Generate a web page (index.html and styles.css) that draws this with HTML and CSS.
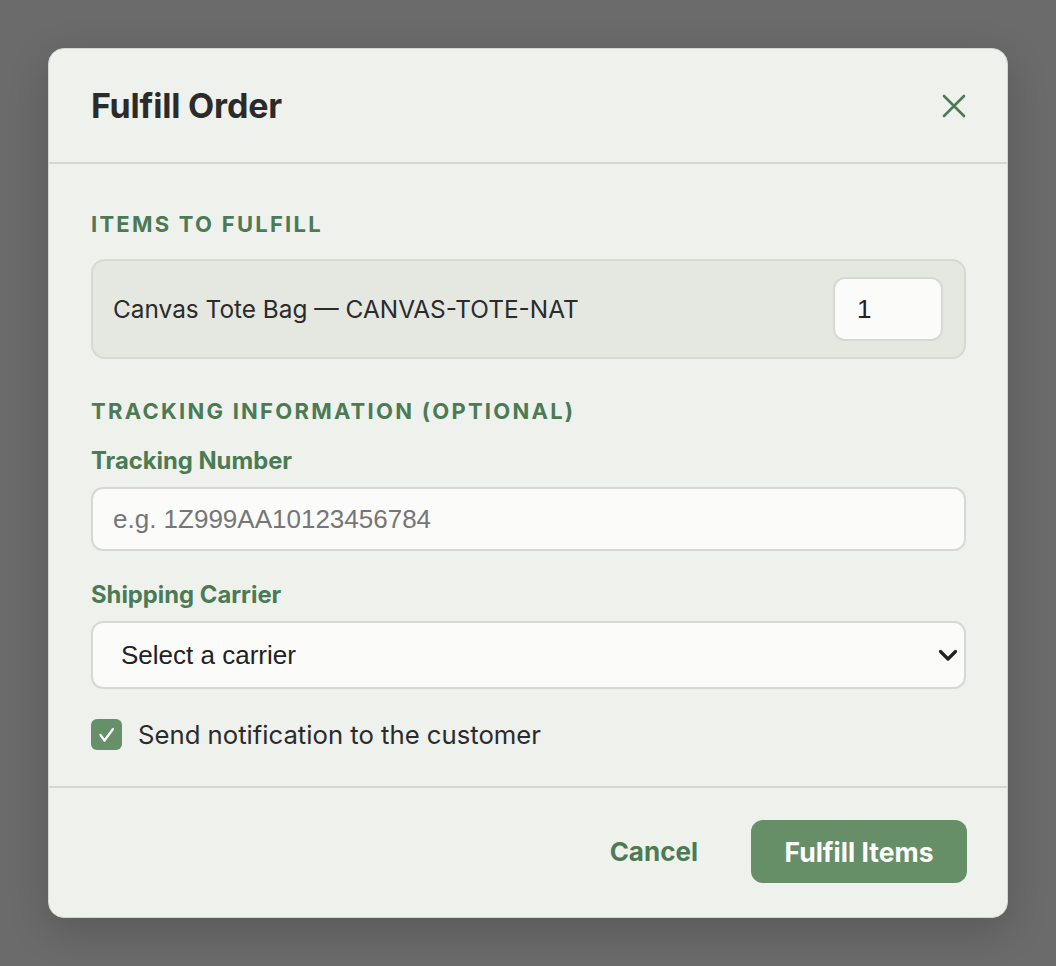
FILE: index.html
```html
<!DOCTYPE html>
<html lang="en">
<head>
<meta charset="utf-8">
<title>Fulfill Order</title>
<link rel="stylesheet" href="styles.css">
</head>
<body>
<div class="backdrop">
  <div class="modal" role="dialog" aria-labelledby="modal-title">
    <header class="modal-header">
      <h2 id="modal-title" class="modal-title">Fulfill Order</h2>
      <button class="close-btn" type="button" aria-label="Close">
        <svg width="24" height="24" viewBox="0 0 24 24" fill="none" stroke="currentColor" stroke-width="2.6" stroke-linecap="round">
          <path d="M2 2 L22 22 M22 2 L2 22"/>
        </svg>
      </button>
    </header>
    <div class="modal-body">
      <h3 class="section-title">Items to fulfill</h3>
      <div class="item-row">
        <span class="item-name">Canvas Tote Bag — CANVAS-TOTE-NAT</span>
        <input class="qty-input" type="text" value="1" aria-label="Quantity">
      </div>

      <h3 class="section-title section-title--spaced">Tracking information (optional)</h3>
      <label class="field-label" for="tracking">Tracking Number</label>
      <input id="tracking" class="text-input" type="text" placeholder="e.g. 1Z999AA10123456784">

      <label class="field-label field-label--spaced" for="carrier">Shipping Carrier</label>
      <div class="select-wrap">
        <select id="carrier" class="select-input">
          <option>Select a carrier</option>
          <option>UPS</option>
          <option>FedEx</option>
          <option>USPS</option>
          <option>DHL</option>
        </select>
        <svg class="select-chevron" width="20" height="13" viewBox="0 0 20 13" fill="none" stroke="#222" stroke-width="3.2" stroke-linecap="round" stroke-linejoin="round">
          <path d="M2.5 2.5 L10 10 L17.5 2.5"/>
        </svg>
      </div>

      <label class="check-row">
        <span class="checkbox">
          <svg width="31" height="31" viewBox="0 0 31 31" fill="none" stroke="#fff" stroke-width="2.2" stroke-linecap="round" stroke-linejoin="round">
            <path d="M9.5 16 L13.5 21.5 L22 10"/>
          </svg>
        </span>
        <span class="check-label">Send notification to the customer</span>
      </label>
    </div>
    <footer class="modal-footer">
      <button class="btn-cancel" type="button">Cancel</button>
      <button class="btn-primary" type="button">Fulfill Items</button>
    </footer>
  </div>
</div>
</body>
</html>
```

FILE: styles.css
```css
* { box-sizing: border-box; }

html, body {
  margin: 0;
  padding: 0;
  height: 100%;
}

body {
  background: #6b6b6b;
  font-family: Inter, "Noto Sans", "Liberation Sans", sans-serif;
  color: #2b2b2b;
}

.backdrop {
  min-height: 100%;
  display: flex;
  align-items: center;
  justify-content: center;
  padding: 48px;
}

.modal {
  width: 960px;
  height: 870px;
  background: #eff1ec;
  border: 1px solid #d3d6cf;
  border-radius: 16px;
  box-shadow: 0 12px 40px rgba(0, 0, 0, 0.18);
  display: flex;
  flex-direction: column;
}

.modal-header {
  flex: none;
  height: 115px;
  padding: 0 41px 0 42px;
  display: flex;
  align-items: center;
  justify-content: space-between;
  border-bottom: 2px solid #d5d8d2;
}

.modal-title {
  margin: 0;
  font-size: 34px;
  font-weight: 700;
  color: #2b2b2b;
  letter-spacing: -0.2px;
}

.close-btn {
  width: 32px;
  height: 32px;
  padding: 0;
  margin-right: -4px;
  border: 0;
  background: none;
  color: #4b7a55;
  display: flex;
  align-items: center;
  justify-content: center;
  cursor: pointer;
}

.modal-body {
  flex: 1;
  padding: 47px 41px 0 42px;
  display: flex;
  flex-direction: column;
}

.section-title {
  margin: 0;
  font-size: 22px;
  line-height: 26px;
  font-weight: 700;
  letter-spacing: 2.25px;
  text-transform: uppercase;
  color: #4b7a55;
}

.section-title--spaced {
  margin-top: 39px;
}

.item-row {
  margin-top: 22px;
  height: 100px;
  padding: 0 21px 0 20px;
  background: #e4e8e1;
  border: 2px solid #d5d9d2;
  border-radius: 14px;
  display: flex;
  align-items: center;
  justify-content: space-between;
}

.item-name {
  font-size: 24.4px;
  color: #2b2b2b;
}

.qty-input {
  width: 110px;
  height: 64px;
  padding: 0 22px;
  background: #fbfbfa;
  border: 2px solid #d6d9d3;
  border-radius: 12px;
  font-family: "Liberation Sans", Arial, sans-serif;
  font-size: 26px;
  color: #222;
  outline: none;
}

.field-label {
  margin-top: 23px;
  font-size: 23.8px;
  line-height: 28px;
  font-weight: 700;
  color: #4b7a55;
}

.field-label--spaced {
  margin-top: 30px;
}

.text-input {
  flex: none;
  margin-top: 12px;
  width: 100%;
  height: 64px;
  padding: 0 20px;
  background: #fbfbfa;
  border: 2px solid #d6d9d3;
  border-radius: 12px;
  font-family: "Liberation Sans", Arial, sans-serif;
  font-size: 26px;
  color: #222;
  outline: none;
}

.text-input::placeholder {
  color: #767676;
  opacity: 1;
}

.select-wrap {
  flex: none;
  position: relative;
  margin-top: 12px;
  height: 68px;
}

.select-input {
  appearance: none;
  -webkit-appearance: none;
  display: block;
  width: 100%;
  height: 68px;
  padding: 0 40px 0 28px;
  background: #fbfbfa;
  border: 2px solid #d6d9d3;
  border-radius: 12px;
  font-family: "Liberation Sans", Arial, sans-serif;
  font-size: 26px;
  color: #222;
  outline: none;
}

.select-chevron {
  position: absolute;
  right: 8px;
  top: 28px;
  pointer-events: none;
}

.check-row {
  margin-top: 30px;
  display: flex;
  align-items: center;
  gap: 16px;
  cursor: pointer;
}

.checkbox {
  width: 31px;
  height: 31px;
  border-radius: 6px;
  background: #66906a;
  display: flex;
  flex: none;
}

.check-label {
  font-size: 25.7px;
  color: #2b2b2b;
}

.modal-footer {
  flex: none;
  height: 131px;
  padding: 0 40px 2px;
  border-top: 2px solid #d5d8d2;
  display: flex;
  align-items: center;
  justify-content: flex-end;
  gap: 27px;
}

.btn-cancel {
  height: 63px;
  padding: 0 26px;
  border: 0;
  background: none;
  font-family: Inter, "Noto Sans", sans-serif;
  font-size: 26px;
  font-weight: 700;
  color: #4b7a55;
  cursor: pointer;
}

.btn-primary {
  width: 216px;
  height: 63px;
  border: 0;
  border-radius: 12px;
  background: #668f67;
  font-family: Inter, "Noto Sans", sans-serif;
  font-size: 26.5px;
  font-weight: 700;
  color: #fff;
  cursor: pointer;
}
```
